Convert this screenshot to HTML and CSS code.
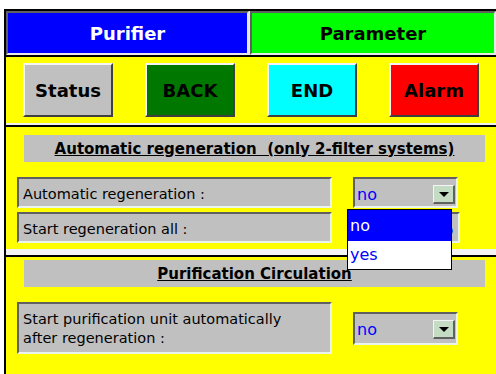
FILE: index.html
```html
<!DOCTYPE html>
<html lang="en">
<head>
    <meta charset="UTF-8">
    <meta name="viewport" content="width=device-width, initial-scale=1.0">
    <title>Purifier Parameter</title>
    <link rel="stylesheet" href="styles.css">
</head>
<body>

    <div class="screen">

        <!-- Tabs -->
        <div class="tabs">
            <div class="tab tab-blue">Purifier</div>
            <div class="tab tab-green">Parameter</div>
        </div>

        <!-- Button bar -->
        <div class="bar buttons">
            <div class="btn btn-gray">Status</div>
            <div class="btn btn-green">BACK</div>
            <div class="btn btn-cyan">END</div>
            <div class="btn btn-red">Alarm</div>
        </div>

        <!-- Automatic regeneration -->
        <section class="bar section section-one">
            <h2 class="title"><span>Automatic regeneration &nbsp;(only 2-filter systems)</span></h2>
            <div class="row">
                <div class="label">Automatic regeneration :</div>
                <div class="select">
                    <span class="value">no</span>
                    <span class="arrow"></span>
                </div>
            </div>
            <div class="row">
                <div class="label">Start regeneration all :</div>
                <div class="field"><span class="value">5</span></div>
            </div>

            <ul class="popup">
                <li class="selected">no</li>
                <li>yes</li>
            </ul>
        </section>

        <!-- Purification circulation -->
        <section class="bar section section-two">
            <h2 class="title"><span>Purification Circulation</span></h2>
            <div class="row row-tall">
                <div class="label label-tall">Start purification unit automatically<br>after regeneration :</div>
                <div class="select">
                    <span class="value">no</span>
                    <span class="arrow"></span>
                </div>
            </div>
        </section>

    </div>

</body>
</html>
```

FILE: styles.css
```css
body {
    margin: 0;
    padding: 0;
    background-color: white;
    font-family: "DejaVu Sans", Verdana, sans-serif;
}

.screen {
    margin: 9px 0 0 4px;
    border-left: 2px solid #000;
    border-top: 2px solid #000;
    background-color: #000;
    height: 363px;
    overflow: hidden;
    position: relative;
}

.tabs {
    display: flex;
    gap: 1px;
    background-color: #e8e8e8;
}

.tab {
    height: 40px;
    border-top: 2px solid #606060;
    border-left: 2px solid #606060;
    border-bottom: 2px solid #e8e8e8;
    border-right: 2px solid #e8e8e8;
    display: flex;
    align-items: center;
    justify-content: center;
    font-weight: bold;
    font-size: 18px;
}

.tab-blue {
    width: 239px;
    background-color: #0000ff;
    color: white;
}

.tab-green {
    flex: 1;
    background-color: #00ff00;
    color: black;
}

.bar {
    background-color: #ffff00;
    border-top: 2px solid #000;
}

.buttons {
    height: 70px;
    box-sizing: border-box;
    border-bottom: 2px solid #f0f0f0;
    display: flex;
    justify-content: space-between;
    align-items: flex-start;
    padding: 6px 17px 0 17px;
}

.btn {
    width: 90px;
    height: 54px;
    box-sizing: border-box;
    border-top: 2px solid #f4f4f4;
    border-left: 2px solid #f4f4f4;
    border-bottom: 2px solid #404040;
    border-right: 2px solid #404040;
    display: flex;
    align-items: center;
    justify-content: center;
    font-weight: bold;
    font-size: 18px;
    color: black;
}

.btn-gray { background-color: #c0c0c0; }
.btn-green { background-color: #007800; }
.btn-cyan { background-color: #00ffff; }
.btn-red { background-color: #ff0000; }

.section {
    position: relative;
    padding: 8px 11px 0 11px;
}

.section-one {
    box-sizing: border-box;
    height: 130px;
    border-bottom: 6px solid #f4f4f4;
}

.section-two {
    padding-top: 3px;
    height: 120px;
}

.title {
    margin: 0 0 15px 7px;
    height: 27px;
    background-color: #c0c0c0;
    display: flex;
    align-items: center;
    justify-content: center;
    font-size: 15px;
    font-weight: bold;
    color: #000;
}

.title span {
    text-decoration: underline;
}

.row {
    display: flex;
    align-items: flex-start;
    gap: 21px;
    margin-bottom: 4px;
}

.label {
    width: 315px;
    height: 31px;
    box-sizing: border-box;
    background-color: #c0c0c0;
    border-top: 2px solid #606060;
    border-left: 2px solid #606060;
    border-bottom: 2px solid #eaf4ea;
    border-right: 2px solid #eaf4ea;
    padding: 2px 0 0 4px;
    display: flex;
    align-items: center;
    font-size: 14.5px;
    color: #000;
}

.label-tall {
    height: 52px;
    line-height: 19px;
}

.row-tall {
    align-items: center;
}

.select,
.field {
    width: 105px;
    height: 31px;
    box-sizing: border-box;
    background-color: #c0c0c0;
    border-top: 2px solid #606060;
    border-left: 2px solid #606060;
    border-bottom: 2px solid #eaf4ea;
    border-right: 2px solid #eaf4ea;
    display: flex;
    align-items: center;
    position: relative;
}

.field {
    width: 107px;
    justify-content: flex-end;
    padding-right: 4px;
}

.value {
    color: #0000ff;
    font-size: 16px;
    padding: 3px 0 0 2px;
}

.arrow {
    position: absolute;
    right: 1px;
    top: 6px;
    width: 19px;
    height: 16px;
    background-color: #c4dcc4;
    border-top: 1px solid #f4f4f4;
    border-left: 1px solid #f4f4f4;
    border-bottom: 2px solid #606060;
    border-right: 2px solid #606060;
}

.arrow::after {
    content: "";
    position: absolute;
    left: 5px;
    top: 6px;
    border-left: 5px solid transparent;
    border-right: 5px solid transparent;
    border-top: 5px solid #000;
}

.row-tall .select {
    height: 33px;
}

.popup {
    position: absolute;
    left: 341px;
    top: 82px;
    width: 103px;
    margin: 0;
    padding: 0;
    list-style-type: none;
    background-color: white;
    border: 1px solid #000;
    z-index: 2;
}

.popup li {
    height: 28px;
    line-height: 28px;
    padding-left: 2px;
    font-size: 16px;
    color: #0000ff;
}

.popup li.selected {
    background-color: #0000ff;
    color: white;
    height: 31px;
    line-height: 31px;
}
```
